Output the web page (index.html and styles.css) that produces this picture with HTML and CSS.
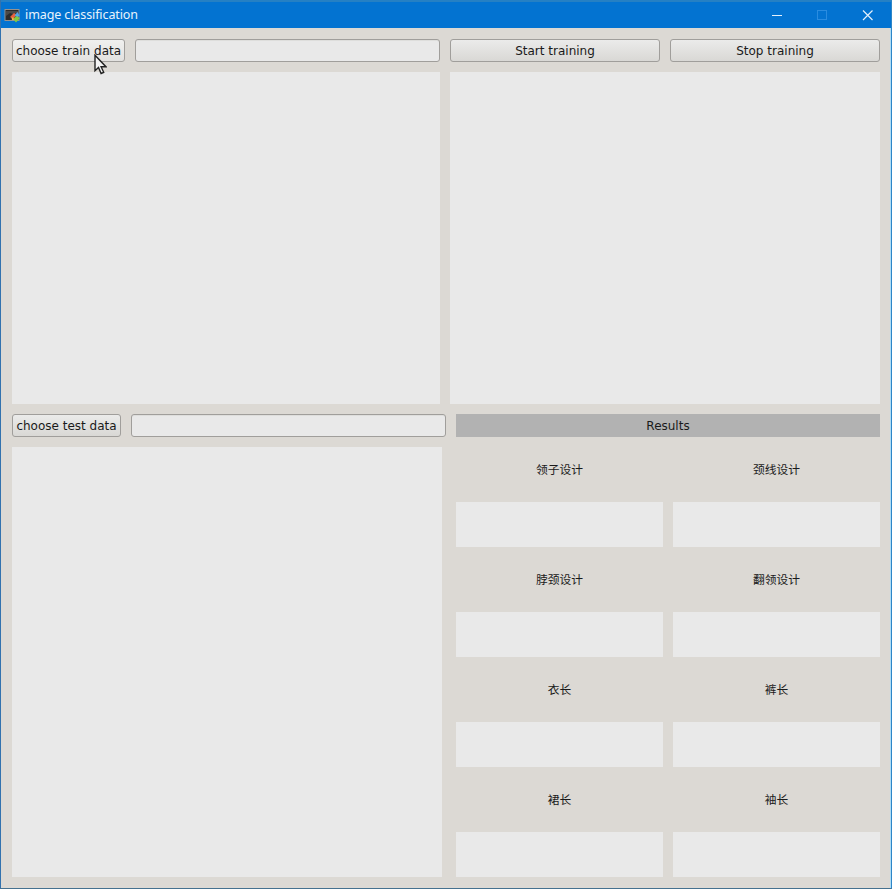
FILE: index.html
```html
<!DOCTYPE html>
<html lang="en">
<head>
<meta charset="utf-8">
<title>image classification</title>
<link rel="stylesheet" href="styles.css">
</head>
<body>
<div class="window">
  <header class="titlebar">
    <svg class="app-icon" width="17" height="14" viewBox="0 0 17 14">
      <rect x="1" y=".5" width="14" height="11" fill="#2c2b2c" stroke="#96928d"/>
      <path d="M2 2h12v2L9 5 6 4 2 7z" fill="#4b4a49"/>
      <path d="M6 8l4-4 3 2-4 4z" fill="#e8603c"/>
      <path d="M13.500 3l2 3.500-2 2-3-2z" fill="#4fa5e8"/>
      <path d="M9 10l3.500-3 3.500 2-4 4.500z" fill="#7fc943"/>
      <path d="M7.500 8.500h2l.5 2.500H8z" fill="#f0b549"/>
    </svg>
    <h1 class="title">image classification</h1>
    <svg class="controls" width="104" height="14" viewBox="0 0 104 14" fill="none">
      <path d="M1 7.500h10" stroke="#e4f0fb"/>
      <rect x="46.500" y="2.500" width="9" height="9" stroke="#2a8ce0"/>
      <path d="M92 2.500l9.500 9.500M101.500 2.500L92 12" stroke="#e4f0fb" stroke-width="1.200"/>
    </svg>
  </header>
  <main class="content">
    <section class="train">
      <div class="row picker">
        <button class="button train-button">choose train data</button>
        <input class="field" aria-label="Train data">
      </div>
      <div class="row actions">
        <button class="button">Start training</button>
        <button class="button">Stop training</button>
      </div>
      <div class="panel"></div>
      <div class="panel"></div>
    </section>
    <section class="test">
      <div class="test-side">
        <div class="row">
          <button class="button test-button">choose test data</button>
          <input class="field" aria-label="Test data">
        </div>
        <div class="panel preview"></div>
      </div>
      <div class="results-side">
        <h2 class="results-title">Results</h2>
        <div class="results">
          <div class="label">领子设计</div><div class="label">颈线设计</div>
          <div class="panel"></div><div class="panel"></div>
          <div class="label">脖颈设计</div><div class="label">翻领设计</div>
          <div class="panel"></div><div class="panel"></div>
          <div class="label">衣长</div><div class="label">裤长</div>
          <div class="panel"></div><div class="panel"></div>
          <div class="label">裙长</div><div class="label">袖长</div>
          <div class="panel"></div><div class="panel"></div>
        </div>
      </div>
    </section>
  </main>
  <svg class="cursor" width="13" height="21" viewBox="0 0 13 21">
    <path d="M1 1.200v15.500l3.500-3.200 2.600 6 2.600-1.200-2.600-5.600h4.800z" fill="#f4f4f4" stroke="#222" stroke-width="1.400"/>
  </svg>
</div>
</body>
</html>
```
FILE: styles.css
```css
* { box-sizing: border-box; }
body { margin: 0; }
.window {
  position: relative;
  width: 892px;
  height: 889px;
  border: solid;
  border-width: 0 1px 1px;
  border-color: #2d72ae #2d86c8 #45718f #3272ae;
  background: #dcd9d4;
  color: #1a1a1a;
  font: 12px "DejaVu Sans", "Noto Sans CJK SC", sans-serif;
  overflow: hidden;
}
.titlebar {
  display: flex;
  align-items: center;
  height: 28px;
  padding: 2px 16px 0 3px;
  border-top: 2px solid #2580c4;
  background: #0373d1;
}
.app-icon { margin-right: 4px; }
.title {
  flex: 1;
  margin: 0 0 2px;
  color: #e9f3fc;
  font: 12.5px/20px "Noto Sans", sans-serif;
  letter-spacing: -0.1px;
}
.controls { margin-bottom: 2px; }
.content { padding: 11px; box-shadow: inset -1px 0 #aedcf5; }
.train {
  display: grid;
  grid-template-columns: 428px 430px;
  grid-template-rows: 23px 332px;
  gap: 10px;
}
.row { display: flex; gap: 10px; height: 23px; }
.button, .field {
  height: 23px;
  padding: 0;
  border: 1px solid #a09e9b;
  border-radius: 3px;
  font: inherit;
  color: inherit;
}
.button {
  flex: 1;
  background: linear-gradient(#ebebea, #d9d8d5);
  white-space: nowrap;
}
.train-button { flex: 0 0 113px; background: linear-gradient(#f0f0ef, #e2e1df); }
.test-button { flex: 0 0 109px; }
.field { flex: 1; min-width: 0; background: #e9e9e9; box-shadow: inset 0 1px #dededc; outline: 0; }
.panel { background: #e9e9e9; }
.test { display: flex; gap: 10px; margin-top: 10px; }
.test-side { width: 434px; }
.preview { width: 430px; height: 430px; margin-top: 10px; }
.results-side { width: 424px; }
.results-title {
  height: 23px;
  margin: 0;
  background: #b2b2b2;
  font: 12px/24px "DejaVu Sans", sans-serif;
  text-align: center;
}
.results {
  display: grid;
  grid-template-columns: 1fr 1fr;
  grid-auto-rows: 45px;
  gap: 10px;
  margin-top: 10px;
}
.label {
  display: flex;
  align-items: center;
  justify-content: center;
  padding-bottom: 1px;
  font: 11.75px/18px "Noto Sans CJK SC", sans-serif;
}
.cursor { position: absolute; left: 93px; top: 54px; }
```
